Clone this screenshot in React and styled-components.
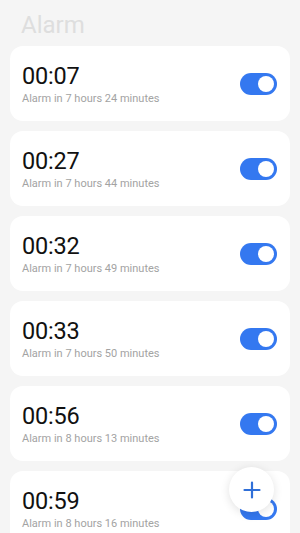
import React, { useState } from "react";
import styled, { createGlobalStyle } from "styled-components";

const GlobalStyle = createGlobalStyle`
  html, body {
    margin: 0;
    padding: 0;
    overflow: hidden;
    background: #f5f5f5;
    font-family: Roboto, "Noto Sans", "Liberation Sans", sans-serif;
  }
`;

const alarms = [
  { time: "00:07", note: "Alarm in 7 hours 24 minutes" },
  { time: "00:27", note: "Alarm in 7 hours 44 minutes" },
  { time: "00:32", note: "Alarm in 7 hours 49 minutes" },
  { time: "00:33", note: "Alarm in 7 hours 50 minutes" },
  { time: "00:56", note: "Alarm in 8 hours 13 minutes" },
  { time: "00:59", note: "Alarm in 8 hours 16 minutes" },
];

const App = () => {
  const [on, setOn] = useState(alarms.map(() => true));

  const flip = (i) => setOn(on.map((v, j) => (j === i ? !v : v)));

  return (
    <Page>
      <GlobalStyle />
      <Title>Alarm</Title>
      <List>
        {alarms.map((a, i) => (
          <Card key={a.time}>
            <Info>
              <Time>{a.time}</Time>
              <Note>{a.note}</Note>
            </Info>
            <Toggle $on={on[i]} onClick={() => flip(i)}>
              <Knob $on={on[i]} />
            </Toggle>
          </Card>
        ))}
      </List>
      <Fab>
        <svg width="20" height="20" viewBox="0 0 20 20">
          <path
            d="M10 2.5v15M2.5 10h15"
            stroke="#2f6fd8"
            strokeWidth="2.2"
            strokeLinecap="round"
          />
        </svg>
      </Fab>
    </Page>
  );
};

export default App;

const Page = styled.div`
  width: 300px;
  height: 533px;
  box-sizing: border-box;
  padding: 0 10px;
`;

const Title = styled.h1`
  margin: 0;
  padding: 11px 0 0 11px;
  height: 46px;
  box-sizing: border-box;
  font-size: 24px;
  line-height: 28px;
  font-weight: 400;
  color: #dedede;
`;

const List = styled.div`
  display: flex;
  flex-direction: column;
  gap: 10px;
`;

const Card = styled.div`
  height: 75px;
  flex-shrink: 0;
  box-sizing: border-box;
  background: #ffffff;
  border-radius: 13px;
  display: flex;
  align-items: center;
  justify-content: space-between;
  padding: 0 13px 0 12px;
`;

const Info = styled.div`
  display: flex;
  flex-direction: column;
  padding-top: 1px;
`;

const Time = styled.span`
  font-size: 23.5px;
  line-height: 26px;
  color: #111111;
  letter-spacing: -0.2px;
`;

const Note = styled.span`
  margin-top: 3px;
  font-size: 11px;
  line-height: 14px;
  color: #a3a3a3;
`;

const Toggle = styled.div`
  width: 37px;
  height: 22px;
  border-radius: 11px;
  background: ${(p) => (p.$on ? "#3478f0" : "#dcdcdc")};
  display: flex;
  align-items: center;
  justify-content: ${(p) => (p.$on ? "flex-end" : "flex-start")};
  padding: 0 3px;
  box-sizing: border-box;
  cursor: pointer;
`;

const Knob = styled.div`
  width: 16px;
  height: 16px;
  border-radius: 50%;
  background: #ffffff;
`;

const Fab = styled.button`
  position: fixed;
  right: 26px;
  bottom: 21px;
  width: 45px;
  height: 45px;
  border-radius: 50%;
  border: none;
  background: #ffffff;
  box-shadow: 0 2px 10px rgba(0, 0, 0, 0.12);
  display: flex;
  align-items: center;
  justify-content: center;
  padding: 0;
`;
